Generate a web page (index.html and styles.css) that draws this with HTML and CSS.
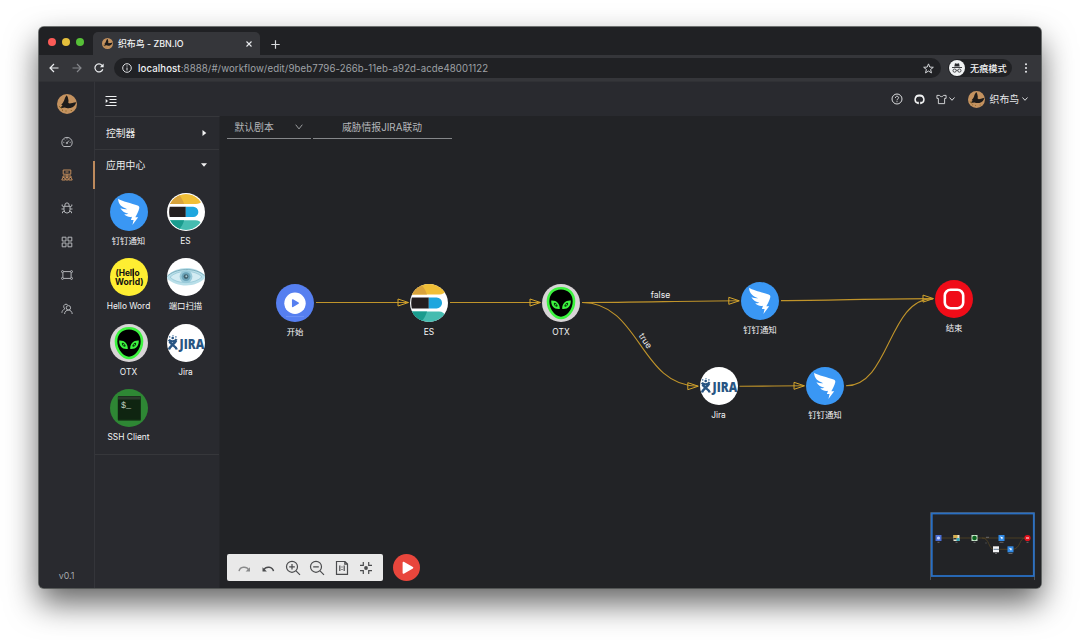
FILE: index.html
```html
<!DOCTYPE html>
<html lang="zh-CN">
<head>
<meta charset="utf-8">
<title>织布鸟 - ZBN.IO</title>
<link rel="stylesheet" href="styles.css">
</head>
<body>
<svg class="defs" width="0" height="0" aria-hidden="true">
  <defs>
    <clipPath id="round"><circle cx="19" cy="19" r="19"/></clipPath>
    <symbol id="bird" viewBox="0 0 20 20">
      <circle cx="10" cy="10" r="10" fill="#c4925f"/>
      <path d="M9.800 1.200 10.900 3.500 11.500 6.600 11.300 8.900 12.800 9.600C14.400 9.200 16 8.700 19.200 8.200 18.600 11 16.500 13.400 13.400 14.100 11.200 14.500 9 14 7.600 13.400L5.200 13.900 3 13.600 4.800 12.200 5.600 11.200 4.200 10.800C5.600 9.400 6.400 8.200 7.200 6.200 7.600 4.400 8.600 2.600 9.800 1.200Z" fill="#1d1b1a"/>
      <path d="M2.200 12.400 4.600 14.400M5 16.200h1M8.500 17h1M13.800 16.500h1" stroke="#7c5c16" stroke-width="1"/>
    </symbol>
    <symbol id="ding" viewBox="0 0 38 38">
      <circle cx="19" cy="19" r="19" fill="#3a97f4"/>
      <path d="M8.200 5.800C11.500 8.400 22 10.400 27.600 12.600 29.200 13.200 29.600 14.200 29.200 15.600 28.500 18.500 26.800 21.800 25.300 24.300H28.200L22.400 31.900 23.600 26.900H20.900L22 23.700C19.600 24.200 16.600 23.800 14.200 21.200 15.800 21.300 17.200 21.100 18.400 20.700 15.200 20.200 12 18.200 10.400 15.200 12.800 16.200 15.200 16.400 17.200 16.200 12.200 14.200 8 11.600 8.200 5.800Z" fill="#fff"/>
    </symbol>
    <symbol id="es" viewBox="0 0 38 38">
      <g clip-path="url(#round)">
        <rect width="38" height="38" fill="#fff"/>
        <path d="M2 10.500V0H36V7C34.500 9.300 32.300 10.500 29.500 10.500Z" fill="#f0bf37"/>
        <path d="M2 10.500V0H11C14 3.500 16 7 17 10.500Z" fill="#d8a33c"/>
        <path d="M1.800 13.500H18.800V24.400H1.800C1 20.500 1 17 1.800 13.500Z" fill="#241f20"/>
        <path d="M18.800 13.500H26.600A5.400 5.400 0 0 1 26.600 24.400H18.800Z" fill="#1ea6de"/>
        <path d="M2 27.600H29C32.500 27.600 34.400 29.500 35 31V38H2Z" fill="#46bcb0"/>
        <path d="M2 27.600H17C16 31.400 14 34.800 11.200 38H2Z" fill="#1a9c8e"/>
      </g>
    </symbol>
    <symbol id="hello" viewBox="0 0 38 38">
      <circle cx="19" cy="19" r="19" fill="#feee32"/>
      <text x="5.500" y="18" class="logo-hello" textLength="24" lengthAdjust="spacingAndGlyphs">(Hello</text>
      <text x="5" y="26.500" class="logo-hello" textLength="28.500" lengthAdjust="spacingAndGlyphs">World)</text>
      <path d="M23.300 10.500V20" stroke="#111" stroke-width="1.200"/>
    </symbol>
    <symbol id="eye" viewBox="0 0 38 38">
      <g clip-path="url(#round)">
        <rect width="38" height="38" fill="#fff"/>
        <path d="M0 18.200C9 8 28 7 38 17.600V20C29 29.800 10 30 0 20.500Z" fill="#b9dfe9"/>
        <path d="M0 18.600C8 10 29 8.600 38 18.200" fill="none" stroke="#6fa3b4" stroke-width=".8"/>
        <path d="M3 19.200C10 11.500 28 11.500 35 18.800 28 26.500 10 26.500 3 19.200Z" fill="#d3ecf3" stroke="#8fc3d2" stroke-width=".7"/>
        <circle cx="19" cy="18.600" r="6.400" fill="#98c9d9"/>
        <circle cx="19" cy="18.600" r="4.400" fill="#6ba3b8"/>
        <circle cx="19" cy="18.600" r="2.400" fill="#41626f"/>
        <circle cx="19.300" cy="18.200" r="1" fill="#a9cbd6"/>
      </g>
    </symbol>
    <symbol id="otx" viewBox="0 0 38 38">
      <circle cx="19" cy="19" r="19" fill="#d8d4d6"/>
      <path d="M19 4.200C27.500 4.200 32 10.400 32 17.600 32 26.500 25 34 19 34S6 26.500 6 17.600C6 10.400 10.500 4.200 19 4.200Z" fill="#000" stroke="#3cf33f" stroke-width="2.600"/>
      <path d="M9.200 16.600C14.200 16.200 18 19.600 17.800 25 12.400 25.600 9 22.400 9.200 16.600ZM28.800 16.600C23.800 16.200 20 19.600 20.200 25 25.600 25.600 29 22.400 28.800 16.600Z" fill="#3cf33f"/>
      <ellipse cx="13.700" cy="20.800" rx="2.400" ry="1.300" transform="rotate(45 13.700 20.800)" fill="#06340a"/>
      <ellipse cx="24.300" cy="20.800" rx="2.400" ry="1.300" transform="rotate(-45 24.300 20.800)" fill="#06340a"/>
      <circle cx="13.700" cy="20.800" r=".7" fill="#3cf33f"/><circle cx="24.300" cy="20.800" r=".7" fill="#3cf33f"/>
    </symbol>
    <symbol id="jira" viewBox="0 0 38 38">
      <g clip-path="url(#round)">
        <rect width="38" height="38" fill="#fff"/>
        <path d="M1.800 15.800C3.600 18.200 8 17.800 9.600 15.200M2 25.500C3 21.500 7.400 20.800 9.200 16.500M2.500 17.500C4 21 8.500 21.500 9.800 25.500" fill="none" stroke="#285583" stroke-width="2.300"/>
        <circle cx="5.700" cy="14" r="1.300" fill="#285583"/><circle cx="2.700" cy="12.900" r=".8" fill="#4b7aa6"/><circle cx="6" cy="11.700" r=".7" fill="#4b7aa6"/><circle cx="8.900" cy="12.900" r=".8" fill="#4b7aa6"/>
        <text x="12.600" y="25.200" class="logo-jira" textLength="24.600" lengthAdjust="spacingAndGlyphs">JIRA</text>
      </g>
    </symbol>
    <symbol id="ssh" viewBox="0 0 38 38">
      <circle cx="19" cy="19" r="19" fill="#2e8734"/>
      <rect x="7.800" y="7" width="23" height="24.500" rx="1" fill="#0f2511"/>
      <path d="M8 7.500H30.600V10.500H8Z" fill="#2b3a2c"/>
      <path d="M8 31.200H30.600" stroke="#1e4a20" stroke-width=".7"/>
      <text x="11" y="19" class="logo-ssh">$_</text>
    </symbol>
    <symbol id="start" viewBox="0 0 38 38">
      <circle cx="19" cy="19" r="19" fill="#567ff0"/>
      <path d="M10 32.500H28" stroke="#6b90f5" stroke-width="1.200"/>
      <circle cx="19" cy="19.200" r="10.700" fill="#fff"/>
      <path d="M16.700 16V22.400L22.200 19.200Z" fill="#567ff0" stroke="#567ff0" stroke-width="1.500" stroke-linejoin="round"/>
    </symbol>
    <symbol id="end" viewBox="0 0 38 38">
      <circle cx="19" cy="19" r="19" fill="#f00c18"/>
      <rect x="9.800" y="9.800" width="18.400" height="18.400" rx="5.800" fill="none" stroke="#fff" stroke-width="2.600"/>
    </symbol>
    <symbol id="arrow" viewBox="0 0 12 8" overflow="visible">
      <path d="M.5.500V7.500L11 4Z" fill="none" stroke="#d5a52c"/>
    </symbol>
  </defs>
</svg>

<div class="window">
  <header class="tabbar">
    <div class="lights"><i class="light red"></i><i class="light yellow"></i><i class="light green"></i></div>
    <div class="tab">
      <svg class="favicon"><use href="#bird"/></svg>
      <span class="tab-title">织布鸟 - ZBN.IO</span>
      <svg class="close" viewBox="0 0 6 6"><path d="M.5.500 5.500 5.500M5.500.500.500 5.500"/></svg>
    </div>
    <svg class="newtab" viewBox="0 0 9 9"><path d="M4.500.300V8.700M.300 4.500H8.700"/></svg>
  </header>

  <div class="toolbar">
    <svg class="nav-icon" viewBox="0 0 10 10"><path d="M9.500 5H1M5 1 1 5 5 9"/></svg>
    <svg class="nav-icon dim" viewBox="0 0 10 10"><path d="M.500 5H9M5 1 9 5 5 9"/></svg>
    <svg class="nav-icon" viewBox="0 0 10 10"><path d="M8.800 6.200A4 4 0 1 1 8 2.300L9 3.500"/><path d="M9.600.500V4.200H5.900Z" class="solid"/></svg>
    <div class="address">
      <svg class="info" viewBox="0 0 10 10"><circle cx="5" cy="5" r="4.300"/><path d="M5 4.500V7.500M5 2.400V3.500"/></svg>
      <span class="url"><b>localhost</b>:8888/#/workflow/edit/9beb7796-266b-11eb-a92d-acde48001122</span>
      <svg class="star" viewBox="0 0 10 10"><path d="M5 .800 6.200 3.700 9.400 3.900 6.900 5.900 7.700 9 5 7.300 2.300 9 3.100 5.900.600 3.900 3.800 3.700Z"/></svg>
    </div>
    <div class="incognito">
      <svg class="spy" viewBox="0 0 16 16"><circle cx="8" cy="8" r="8" fill="#f1f3f4"/><path d="M5.300 6.600 6 3.300 8 3.700 10 3.300 10.700 6.600Z" fill="#2a2b2f"/><path d="M3 7.500H13" stroke="#2a2b2f" stroke-width=".9"/><g fill="none" stroke="#2a2b2f" stroke-width=".8"><circle cx="5.600" cy="10.600" r="1.600"/><circle cx="10.400" cy="10.600" r="1.600"/><path d="M7.200 10.400Q8 9.900 8.800 10.400"/></g></svg>
      <span>无痕模式</span>
    </div>
    <svg class="kebab" viewBox="0 0 4 10"><circle cx="2" cy="1.200" r="1"/><circle cx="2" cy="5" r="1"/><circle cx="2" cy="8.800" r="1"/></svg>
  </div>

  <div class="app">
    <nav class="rail">
      <svg class="brand"><use href="#bird"/></svg>
      <div class="menu">
        <a class="item"><svg viewBox="0 0 12 12"><path d="M2.600 10.500A5.200 5.200 0 1 1 9.400 10.500ZM6 6.800 8 4.500M6 2.300V3.300M2.300 6.300H3.300M8.700 6.300H9.700M3.400 3.600 4.100 4.300"/><circle cx="5.900" cy="7" r=".7"/></svg></a>
        <a class="item active"><svg viewBox="0 0 12 12"><path d="M2.200 1H9.800V5.200H2.200ZM4.500 3H7.500M6 5V7M2 8.500V7H10V8.500M6 7V8.500M.800 11 1.800 8.500H3.400L4.400 11ZM4.900 11V8.500H7.100V11ZM7.600 11 8.600 8.500H10.200L11.200 11Z"/></svg></a>
        <a class="item"><svg viewBox="0 0 12 12"><path d="M3 4.300H9V7.800A3 3.300 0 0 1 3 7.800ZM3.900 4.200V3A2.100 2.100 0 0 1 8.100 3V4.200M3 5 1.200 4V2.500M9 5 10.800 4V2.500M3 7H.500M9 7H11.500M3.300 9 1.500 9.800V11.200M8.700 9 10.500 9.800V11.200"/></svg></a>
        <a class="item"><svg viewBox="0 0 12 12"><path d="M1.200 1.200H5V5H1.200ZM7 1.200H10.800V5H7ZM1.200 7H5V10.800H1.200ZM7 7H10.800V10.800H7Z"/></svg></a>
        <a class="item"><svg viewBox="0 0 12 12"><path d="M2.500 2.600H9.500M2.500 9.400H9.500M1.900 3.500V8.500M10.100 3.500V8.500"/><circle cx="1.500" cy="2.600" r="1"/><circle cx="10.500" cy="2.600" r="1"/><circle cx="1.500" cy="9.400" r="1"/><circle cx="10.500" cy="9.400" r="1"/></svg></a>
        <a class="item"><svg viewBox="0 0 12 12"><circle cx="7.400" cy="4.800" r="2.200"/><path d="M3.600 11C3.600 8.500 5.500 7.100 7.400 7.100S11.200 8.500 11.200 11M6.500 1.600C4.500.500 2.500 1.800 2.700 3.800 2.800 5 3.500 5.500 4 6M3.700 6C2 6.700 1 8 .900 9.800"/></svg></a>
      </div>
      <span class="version">v0.1</span>
    </nav>

    <div class="main">
      <div class="topbar">
        <svg class="fold" viewBox="0 0 12 12"><path d="M.500 1.500H11.500M4.500 4.500H11.500M4.500 7.500H11.500M.500 10.500H11.500"/><path d="M.700 3.900V8.100L3 6Z" class="solid"/></svg>
        <div class="actions">
          <svg class="help" viewBox="0 0 12 12"><circle cx="6" cy="6" r="5"/><path d="M4.400 4.900C4.400 2.700 7.700 2.800 7.600 4.800 7.500 6 6 5.800 6 7.300M6 8.200V9.200"/></svg>
          <svg class="github" viewBox="0 0 12 12"><path d="M6 1.500A4.400 4.400 0 0 0 4.400 10.100V8.500M6 1.500A4.400 4.400 0 0 1 7.600 10.100V8.500"/><path d="M2.800 1.300 5 2.300H7L9.200 1.300 9.400 4 8.300 2.800H3.700L2.600 4Z" class="solid"/></svg>
          <span class="theme"><svg class="shirt" viewBox="0 0 12 12"><path d="M1 1.500H3.800C4.500 3.300 7.500 3.300 8.200 1.500H11V4.800H9.400V10.500H2.600V4.800H1Z"/></svg><svg class="caret" viewBox="0 0 6 4"><path d="M.500.500 3 3.300 5.500.500"/></svg></span>
          <span class="user"><svg class="avatar"><use href="#bird"/></svg><span>织布鸟</span><svg class="caret" viewBox="0 0 6 4"><path d="M.500.500 3 3.300 5.500.500"/></svg></span>
        </div>
      </div>

      <div class="workspace">
        <aside class="panel">
          <div class="section"><span>控制器</span><svg class="tri" viewBox="0 0 6 6"><path d="M1.500 0V6L5.300 3Z"/></svg></div>
          <div class="section open"><span>应用中心</span><svg class="tri" viewBox="0 0 6 6"><path d="M0 1.300H6L3 4.800Z"/></svg></div>
          <div class="apps">
            <div class="tile"><svg><use href="#ding"/></svg><span>钉钉通知</span></div>
            <div class="tile ringed"><svg><use href="#es"/></svg><span>ES</span></div>
            <div class="tile"><svg><use href="#hello"/></svg><span>Hello Word</span></div>
            <div class="tile"><svg><use href="#eye"/></svg><span>端口扫描</span></div>
            <div class="tile"><svg><use href="#otx"/></svg><span>OTX</span></div>
            <div class="tile"><svg><use href="#jira"/></svg><span>Jira</span></div>
            <div class="tile"><svg><use href="#ssh"/></svg><span>SSH Client</span></div>
          </div>
        </aside>

        <section class="canvas">
          <div class="fields">
            <div class="select"><span>默认剧本</span><svg viewBox="0 0 8 6"><path d="M.700.700 4 4.900 7.300.700"/></svg></div>
            <div class="name">威胁情报JIRA联动</div>
          </div>

          <svg class="edges" viewBox="220 116 821 472">
            <g fill="none" stroke="#c0942a" stroke-width="1.100">
              <path d="M316 302.500H408"/>
              <path d="M450 302.500H540"/>
              <path d="M582 302.500C640 302.500 680 301 739 300.800"/>
              <path d="M582 302.500C640 302.500 640 386.200 698 386.200"/>
              <path d="M781 300.600C830 300.400 880 298.600 933 298.600"/>
              <path d="M739.500 386.300C765 386.300 780 385.800 804 385.800"/>
              <path d="M846 385.800C890 385.800 888 298.600 933 298.600"/>
            </g>
            <use href="#arrow" x="397.500" y="298.500" width="12" height="8"/>
            <use href="#arrow" x="529.500" y="298.500" width="12" height="8"/>
            <use href="#arrow" x="728.300" y="296.800" width="12" height="8"/>
            <use href="#arrow" x="687.300" y="382.200" width="12" height="8"/>
            <use href="#arrow" x="793.500" y="381.800" width="12" height="8"/>
            <use href="#arrow" x="922.500" y="294.600" width="12" height="8"/>
            <text x="660.500" y="297.800" class="edge-label">false</text>
            <text class="edge-label" transform="translate(643 342.500) rotate(56)">true</text>
          </svg>

          <div class="node n-start"><svg><use href="#start"/></svg><span>开始</span></div>
          <div class="node n-es"><svg><use href="#es"/></svg><span>ES</span></div>
          <div class="node n-otx"><svg><use href="#otx"/></svg><span>OTX</span></div>
          <div class="node n-ding"><svg><use href="#ding"/></svg><span>钉钉通知</span></div>
          <div class="node n-jira"><svg><use href="#jira"/></svg><span>Jira</span></div>
          <div class="node n-ding2"><svg><use href="#ding"/></svg><span>钉钉通知</span></div>
          <div class="node n-end"><svg><use href="#end"/></svg><span>结束</span></div>

          <div class="dock">
            <div class="tools">
              <svg class="faded" viewBox="0 0 16 16"><path d="M3 11.200C4 6.500 10.500 5.800 12.800 10" stroke-width="1.400"/><path d="M14 7.200V11.600H9.600Z" class="solid"/></svg>
              <svg viewBox="0 0 16 16"><path d="M13.500 11.200C12.500 6.500 6 5.800 3.700 10" stroke-width="1.500"/><path d="M2.500 7.200V11.600H6.900Z" class="solid"/></svg>
              <svg viewBox="0 0 16 16"><circle cx="7" cy="6.800" r="5.500"/><path d="M11 10.800 15 14.800M4.200 6.800H9.800M7 4V9.600"/></svg>
              <svg viewBox="0 0 16 16"><circle cx="7" cy="6.800" r="5.500"/><path d="M11 10.800 15 14.800M4.200 6.800H9.800"/></svg>
              <svg viewBox="0 0 16 16"><path d="M2.500 1.500H11L13.500 4V14.300H2.500ZM10.800 1.500V4.200H13.500M5.800 5.500V11M10.200 5.500V11M8 6.500V7.500M8 9V10"/></svg>
              <svg viewBox="0 0 16 16"><circle cx="8" cy="8" r="1.900" class="solid"/><path d="M5.300 2V5.300H2M10.700 2V5.300H14M5.300 14V10.700H2M10.700 14V10.700H14"/></svg>
            </div>
            <svg class="run" viewBox="0 0 26 26"><circle cx="13" cy="13" r="13" fill="#e8463c"/><path d="M10 8.200V18.300L18.800 13.200Z" fill="#fff" stroke="#fff" stroke-width="1.500" stroke-linejoin="round"/></svg>
          </div>

          <svg class="minimap" viewBox="0 0 105 69">
            <path d="M.500 68V.500H104.500V68" fill="none" stroke="#4d5156"/>
            <rect x="1.800" y="1.500" width="102" height="62.500" fill="none" stroke="#296fc4" stroke-width="1.800"/>
            <path d="M10 26H95M52 26C60 26 58 37.300 64 37.300H80M82 37.300C91 37.300 89 26 95 26" fill="none" stroke="#5d4b24" stroke-width=".7"/>
            <rect x="5.500" y="23" width="6" height="6" fill="#4b6fd6"/><circle cx="8.500" cy="26" r="1.600" fill="#c6d2fa"/>
            <rect x="23.500" y="23" width="6" height="6" fill="#e9e4cf"/><path d="M23.500 23h4v3h-4Z" fill="#d7b04b"/><path d="M26.500 26h3v3h-3Z" fill="#37aebb"/><path d="M23.500 26h3v1.500h-3Z" fill="#333"/>
            <rect x="41.500" y="23" width="6" height="6" fill="#c9e5ca"/><circle cx="44.500" cy="26" r="2.300" fill="#0b6420"/>
            <rect x="68.500" y="23" width="6" height="6" fill="#328be6"/><path d="M70 24.500 73 25.500 72 27.500Z" fill="#fff"/>
            <rect x="63" y="34.300" width="6" height="6" fill="#f3f4f6"/><path d="M63.500 37.300H69" stroke="#647d99"/>
            <rect x="77.500" y="34.300" width="6" height="6" fill="#328be6"/><path d="M79 35.800 82 36.800 81 38.800Z" fill="#fff"/>
            <circle cx="97.500" cy="26" r="3.100" fill="#e3111d"/><path d="M96 26H99" stroke="#fff"/>
            <path d="M7.500 30.300h2M25.500 30.300h2M43.500 30.300h2M69.500 30.300h4M65 41.500h2M78.500 41.500h4M96.500 30.300h2M56 25.300h3M55.500 31h1" stroke="#77797c" stroke-width=".8"/>
          </svg>
        </section>
      </div>
    </div>
  </div>
</div>
</body>
</html>
```
FILE: styles.css
```css
* { box-sizing: border-box; }
body { margin: 0; width: 1080px; height: 640px; overflow: hidden; background: #fff; padding: 27px 39px; font-family: Inter, "Noto Sans CJK SC", sans-serif; color: #e4e5e7; }
svg { display: block; flex: none; }
.defs { position: absolute; }
.window { width: 1002px; height: 561px; display: flex; flex-direction: column; border-radius: 5px; overflow: hidden; background: #202124; box-shadow: 0 0 0 1px rgba(70,74,72,.75), 0 15px 32px rgba(0,0,0,.62); }

.tabbar { height: 28px; flex: none; display: flex; align-items: flex-start; background: #202124; }
.lights { display: flex; gap: 6px; padding: 10.500px 0 0 9px; width: 54px; }
.light { width: 8px; height: 8px; border-radius: 50%; }
.red { background: #fc5b57; }
.yellow { background: #e5bf3c; }
.green { background: #57c038; }
.tab { width: 167px; height: 23px; margin-top: 5px; padding: 0 8px 0 9px; display: flex; align-items: center; background: #35363a; border-radius: 5px 5px 0 0; }
.favicon { width: 11px; height: 11px; }
.tab-title { flex: 1; margin: -1px 0 0 5px; font-size: 8.900px; font-weight: 500; color: #f1f2f3; white-space: nowrap; }
.close { width: 6px; height: 6px; stroke: #e8eaed; stroke-width: 1.1; }
.newtab { width: 9px; height: 9px; margin: 12.500px 0 0 11px; stroke: #d8dadd; stroke-width: 1.2; }

.toolbar { height: 26px; flex: none; display: flex; align-items: center; padding: 0 13.500px 0 10px; background: #35363a; }
.nav-icon { width: 10px; height: 10px; margin-right: 12.500px; fill: none; stroke: #eceef0; stroke-width: 1.200; }
.nav-icon.dim { stroke: #85878b; }
.nav-icon:nth-child(3) { margin-right: 10px; }
.nav-icon .solid { fill: #eceef0; stroke: none; }
.address { width: 827px; height: 20px; border-radius: 10px; background: #202124; display: flex; align-items: center; padding: 0 7px 0 8px; }
.info { width: 10px; height: 10px; fill: none; stroke: #dfe1e4; stroke-width: 1; }
.url { flex: 1; margin-left: 6px; font-size: 9.650px; color: #9fa2a6; white-space: nowrap; letter-spacing: .1px; }
.url b { font-weight: 500; color: #eff0f2; }
.star { width: 11px; height: 11px; fill: none; stroke: #d7d9dc; stroke-width: .9; }
.incognito { height: 18px; margin-left: 7px; padding: 0 6px 0 1px; width: 64px; display: flex; align-items: center; gap: 5px; border-radius: 9px; background: #202124; font-size: 9.200px; font-weight: 500; color: #f2f3f4; white-space: nowrap; }
.spy { width: 16px; height: 16px; }
.kebab { width: 4px; height: 10px; margin-left: auto; fill: #eceef0; }

.app { flex: 1; display: flex; background: #292a2f; min-height: 0; }
.rail { width: 56px; display: flex; flex-direction: column; align-items: center; padding-top: 12px; border-right: 1px solid #34353a; border-top: 1px solid #303135; }
.brand { width: 20px; height: 20px; }
.menu { width: 100%; margin-top: 11px; }
.item { height: 33.400px; display: flex; align-items: center; justify-content: center; }
.item svg { width: 12px; height: 12px; fill: none; stroke: #b4b6ba; stroke-width: 1; }
.item.active { background: linear-gradient(#bd8a5d, #bd8a5d) right center / 2px 28px no-repeat; margin-right: -1px; padding-right: 1px; }
.item.active svg { stroke: #c18c5c; }
.version { margin-top: auto; margin-bottom: 7.500px; font-size: 8.800px; line-height: 11px; color: #a6a8ac; }

.main { flex: 1; display: flex; flex-direction: column; min-width: 0; }
.topbar { height: 35px; flex: none; display: flex; align-items: center; justify-content: space-between; padding: 0 13px 0 10px; border-top: 1px solid #303135; }
.fold { width: 12px; height: 12px; margin-top: 3px; fill: none; stroke: #f0f1f2; stroke-width: 1; }
.fold .solid { fill: #f0f1f2; stroke: none; }
.actions { display: flex; align-items: center; font-size: 9.800px; color: #e8e9eb; }
.actions svg { fill: none; stroke: #dcdddf; stroke-width: 1; }
.help { width: 12px; height: 12px; margin-right: 11px; }
.actions .github { width: 11px; height: 11px; margin-right: 11px; stroke: #f0f1f2; stroke-width: 1.700; }
.actions .github .solid { fill: #f0f1f2; stroke: none; }
.theme { display: flex; align-items: center; gap: 2px; margin-right: 13px; }
.shirt { width: 11px; height: 11px; }
.actions .caret { width: 6px; height: 4px; }
.user { display: flex; align-items: center; }
.actions .avatar { width: 17px; height: 17px; margin-right: 5px; stroke: none; }
.user .caret { margin-left: 3px; }

.workspace { flex: 1; display: flex; min-height: 0; }
.panel { width: 125px; border-top: 1px solid #36373b; border-right: 1px solid #25262a; }
.section { height: 33px; display: flex; align-items: center; justify-content: space-between; padding: 0 12px 0 11px; border-bottom: 1px solid #36373b; font-size: 9.800px; color: #eceded; }
.section.open { border-bottom: 0; padding-bottom: 3px; }
.tri { width: 6px; height: 6px; fill: #f2f2f3; }
.apps { display: grid; grid-template-columns: 57px 57px; grid-auto-rows: 65.400px; padding: 10px 0 0 5px; border-bottom: 1px solid #36373b; height: 272px; }
.tile { display: flex; flex-direction: column; align-items: center; }
.tile svg { width: 38px; height: 38px; }
.tile.ringed svg { padding: 1px; background: #fff; border-radius: 50%; }
.tile span, .node span { margin-top: 4px; font-size: 8.400px; line-height: 12px; color: #f4f5f6; white-space: nowrap; }

.canvas { position: relative; flex: 1; display: flex; flex-direction: column; justify-content: space-between; background: #222326; }
.fields { display: flex; gap: 2px; padding-left: 7px; font-size: 9.800px; color: #b5b7ba; }
.select, .name { height: 22.500px; border-bottom: 1px solid #85878a; display: flex; align-items: center; }
.select { width: 83.500px; justify-content: space-between; padding: 0 8px 0 7.500px; }
.select svg { width: 8px; height: 6px; fill: none; stroke: #a8aaad; stroke-width: .9; }
.name { width: 139px; justify-content: center; }
.edges { position: absolute; left: 0; top: 0; width: 821px; height: 472px; }
.edge-label { font-size: 8.600px; fill: #f0f1f2; text-anchor: middle; }
.node { position: absolute; width: 38px; display: flex; flex-direction: column; align-items: center; }
.node svg { width: 38px; height: 38px; }
.n-start { left: 56px; top: 167.500px; }
.n-es { left: 190px; top: 167.500px; }
.n-otx { left: 322px; top: 167.500px; }
.n-ding { left: 521px; top: 166px; }
.n-jira { left: 479.500px; top: 251px; }
.n-ding2 { left: 586px; top: 251px; }
.n-end { left: 715px; top: 164px; }

.dock { display: flex; align-items: center; gap: 10px; padding: 0 0 7px 7px; }
.tools { width: 156px; height: 27px; display: flex; align-items: center; justify-content: space-between; padding: 0 9px; background: #e9e9e9; border-radius: 2px; }
.tools svg { width: 16px; height: 16px; fill: none; stroke: #4b4c4e; stroke-width: 1.200; }
.tools .solid { fill: #4b4c4e; stroke: none; }
.tools .faded { opacity: .6; }
.run { width: 27px; height: 27px; margin-left: -.5px; }
.minimap { position: absolute; left: 709.500px; top: 396px; width: 105px; height: 69px; }

.logo-hello { font: 700 8.800px Inter, sans-serif; fill: #111; }
.logo-jira { font: 800 14px "Open Sans", sans-serif; fill: #285583; }
.logo-ssh { font: 8.500px "Liberation Mono", monospace; fill: #c9d8ca; }
```
